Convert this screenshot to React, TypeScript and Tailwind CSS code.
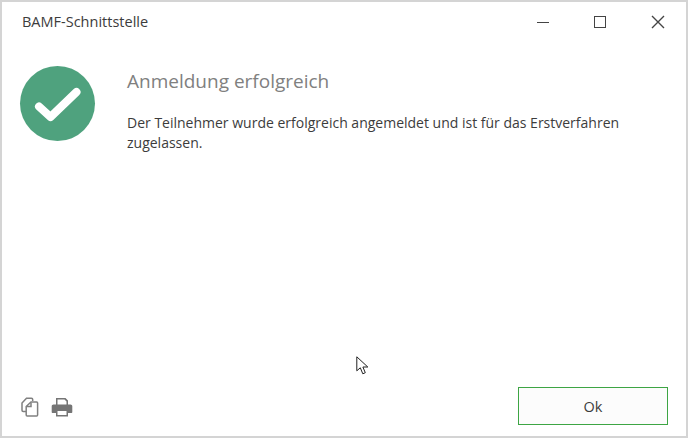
import { FC } from "react";

const CopyIcon: FC = () => (
  <svg width="18" height="20" viewBox="0 0 18 20" fill="none" stroke="#808080" strokeWidth="1.5">
    <path d="M5 14.5H2.2C1.5 14.5 1 14 1 13.3V6L5.5 1.2H10.5C11.2 1.2 11.7 1.7 11.7 2.4V4" />
    <path d="M5.2 18V9.5L10 5H15.6C16.2 5 16.6 5.4 16.6 6V18C16.6 18.6 16.2 19 15.6 19H6.2C5.6 19 5.2 18.6 5.2 18Z" fill="#fff" />
    <path d="M10 5.5V9.5H5.5" />
  </svg>
);

const PrintIcon: FC = () => (
  <svg width="22" height="20" viewBox="0 0 22 20">
    <path fill="#757575" d="M5 1h9.5L17 3.5V8H15.500V4.500L13.500 2.500H6.500V8H5V1Z" />
    <path fill="#757575" fillRule="evenodd" d="M2.5 7.500h17c1 0 1.800.8 1.800 1.800V15c0 .6-.4 1-1 1H17v3.500H5V16H1.700c-.6 0-1-.4-1-1V9.300c0-1 .8-1.800 1.800-1.800ZM6.500 14V18H15.500V14H6.500Z" />
  </svg>
);

const Cursor: FC = () => (
  <svg className="absolute left-[354px] top-[354px]" width="14" height="20" viewBox="0 0 14 20" fill="#fff" stroke="#222" strokeWidth="1">
    <path d="M0.800 0.800V14.800L4.300 11.800L6.800 17.800L9.300 16.700L6.900 11H11.800L0.800 0.800Z" />
  </svg>
);

export default function App() {
  return (
    <div
      className="relative flex h-[438px] w-[688px] flex-col overflow-hidden border-[2px] border-[#d4d4d4] bg-white"
      style={{ fontFamily: '"Open Sans", "Noto Sans", sans-serif' }}
    >
      <div className="flex h-[39px] shrink-0 items-center pl-[20px]">
        <span className="flex-1 text-[14.500px] text-[#3c3c3c]">BAMF-Schnittstelle</span>
        <div className="-mr-[2px] flex items-center pt-[1px]">
          <div className="flex w-[58px] justify-center">
            <div className="h-px w-[12px] bg-[#444]" />
          </div>
          <div className="flex w-[58px] justify-center pr-[2px]">
            <div className="size-[12px] border border-[#444]" />
          </div>
          <div className="flex w-[58px] justify-center pr-[2px]">
            <svg width="14" height="14" viewBox="0 0 14 14" stroke="#444" strokeWidth="1.400">
              <path d="M1 1L13 13M13 1L1 13" />
            </svg>
          </div>
        </div>
      </div>

      <div className="flex flex-1 pl-[18px] pr-[40px] pt-[25px]">
        <div className="flex size-[75px] shrink-0 items-center justify-center rounded-full bg-[#4fa27e]">
          <svg width="48" height="38" viewBox="0 0 48 38" fill="none" stroke="#fff" strokeWidth="8" strokeLinecap="round" strokeLinejoin="round">
            <path d="M5 21.500L16.500 32L42.500 7" />
          </svg>
        </div>
        <div className="ml-[32px] flex flex-col">
          <h1 className="pt-[3px] text-[19px] leading-[24px] text-[#808080]">Anmeldung erfolgreich</h1>
          <p className="mt-[20px] w-[510px] text-[14px] leading-[20px] text-[#3c3c3c]">
            Der Teilnehmer wurde erfolgreich angemeldet und ist für das Erstverfahren zugelassen.
          </p>
        </div>
      </div>

      <div className="flex items-end justify-between pb-[11px] pl-[19px] pr-[18px]">
        <div className="flex items-center gap-[12px] pb-[8px]">
          <CopyIcon />
          <PrintIcon />
        </div>
        <button className="h-[38px] w-[150px] border border-[#3da544] bg-[#fcfcfc] pt-[2px] text-[14.500px] text-[#3c3c3c]">Ok</button>
      </div>

      <Cursor />
    </div>
  );
}
